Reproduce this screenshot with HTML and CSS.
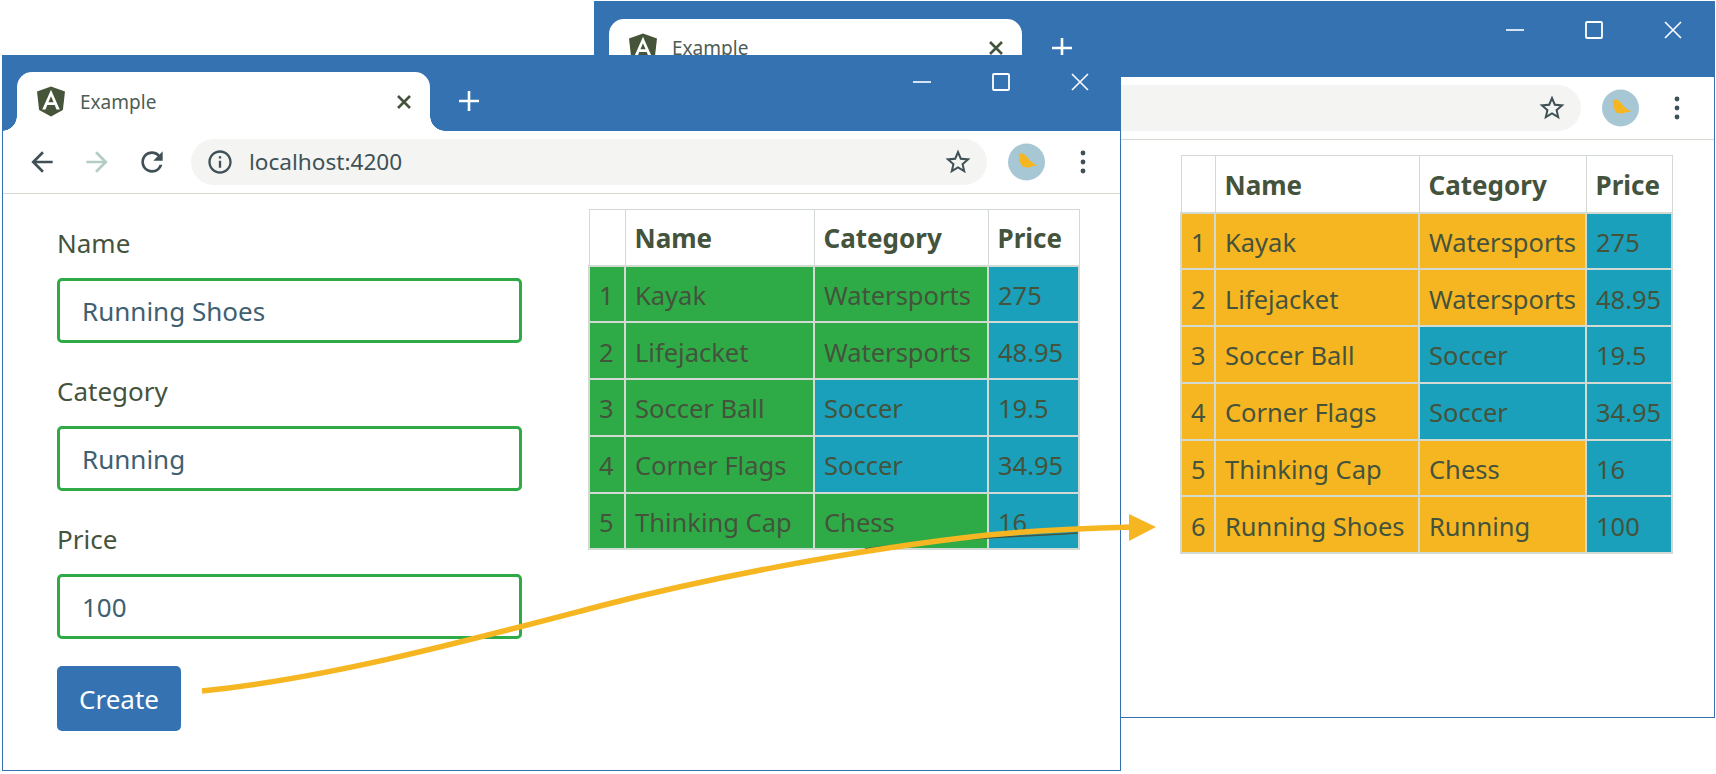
FILE: index.html
```html
<!DOCTYPE html>
<html lang="en">
<head>
  <meta charset="UTF-8">
  <title>Example</title>
  <link rel="stylesheet" href="styles.css">
</head>
<body>

  <svg class="defs" width="0" height="0">
    <symbol id="i-angular" viewBox="32 30 186 200"><path fill="#46553a" d="M125 30L31.9 63.2l14.2 123.1L125 230l78.9-43.7 14.2-123.1z"/><path fill="#fff" d="M125 52.1L66.8 182.6h21.7l11.7-29.2h49.4l11.7 29.2h21.7zM142 135.4h-34l17-40.9z"/></symbol>
    <symbol id="i-back" viewBox="0 0 24 24"><path d="M20 11H7.83l5.59-5.59L12 4l-8 8 8 8 1.41-1.41L7.83 13H20v-2z"/></symbol>
    <symbol id="i-reload" viewBox="0 0 24 24"><path d="M17.65 6.35A7.958 7.958 0 0 0 12 4c-4.42 0-7.99 3.58-7.99 8s3.57 8 7.99 8c3.73 0 6.84-2.55 7.73-6h-2.08A5.99 5.99 0 0 1 12 18c-3.31 0-6-2.69-6-6s2.69-6 6-6c1.66 0 3.14.69 4.22 1.78L13 11h7V4l-2.35 2.35z"/></symbol>
    <symbol id="i-info" viewBox="0 0 24 24"><path d="M11 7h2v2h-2zm0 4h2v6h-2zm1-9C6.48 2 2 6.48 2 12s4.48 10 10 10 10-4.48 10-10S17.52 2 12 2zm0 18c-4.41 0-8-3.59-8-8s3.59-8 8-8 8 3.59 8 8-3.59 8-8 8z"/></symbol>
    <symbol id="i-star" viewBox="0 0 24 24"><path d="M22 9.24l-7.19-.62L12 2 9.19 8.63 2 9.24l5.46 4.73L5.82 21 12 17.27 18.18 21l-1.63-7.03L22 9.24zM12 15.4l-3.76 2.27 1-4.28-3.32-2.88 4.38-.38L12 6.1l1.71 4.04 4.38.38-3.32 2.88 1 4.28L12 15.4z"/></symbol>
    <symbol id="i-dots" viewBox="0 0 8 26"><circle cx="4" cy="4" r="2.4"/><circle cx="4" cy="13" r="2.4"/><circle cx="4" cy="22" r="2.4"/></symbol>
    <symbol id="i-bird" viewBox="0 0 38 38"><circle cx="19" cy="19" r="19" fill="#a6c7d3"/><path fill="#f6b622" d="M11 11l4-1 3 2 5 6 7 5-5 0-3 2-7-1-3-5z"/></symbol>
    <symbol id="i-tabx" viewBox="0 0 16 16"><path d="M2 2l12 12M14 2L2 14" stroke="currentColor" stroke-width="2.6" fill="none"/></symbol>
    <symbol id="i-plus" viewBox="0 0 20 20"><path d="M10 0v20M0 10h20" stroke="currentColor" stroke-width="2.6" fill="none"/></symbol>
    <symbol id="i-min" viewBox="0 0 18 18"><path d="M0 9h18" stroke="currentColor" stroke-width="1.6" fill="none"/></symbol>
    <symbol id="i-max" viewBox="0 0 18 18"><rect x="1" y="1" width="16" height="16" rx="1" stroke="currentColor" stroke-width="1.8" fill="none"/></symbol>
    <symbol id="i-close" viewBox="0 0 18 18"><path d="M1 1l16 16M17 1L1 17" stroke="currentColor" stroke-width="1.6" fill="none"/></symbol>
  </svg>

  <!-- Window behind -->
  <div class="window window-back">
    <div class="titlebar">
      <div class="tab">
        <svg class="tab-logo"><use href="#i-angular"/></svg>
        <span class="tab-title">Example</span>
        <svg class="tab-close"><use href="#i-tabx"/></svg>
      </div>
      <svg class="new-tab"><use href="#i-plus"/></svg>
      <div class="controls">
        <svg><use href="#i-min"/></svg>
        <svg><use href="#i-max"/></svg>
        <svg><use href="#i-close"/></svg>
      </div>
    </div>
    <div class="toolbar">
      <div class="nav">
        <svg class="nav-icon"><use href="#i-back"/></svg>
        <svg class="nav-icon forward"><use href="#i-back"/></svg>
        <svg class="nav-icon"><use href="#i-reload"/></svg>
      </div>
      <div class="omnibox">
        <svg class="info-icon"><use href="#i-info"/></svg>
        <span class="url">localhost:4200</span>
        <svg class="star-icon"><use href="#i-star"/></svg>
      </div>
      <svg class="avatar"><use href="#i-bird"/></svg>
      <svg class="dots"><use href="#i-dots"/></svg>
    </div>
    <div class="content content-back">
      <table class="products products-back">
        <thead>
          <tr><th class="col-id"></th><th class="col-name">Name</th><th class="col-cat">Category</th><th class="col-price">Price</th></tr>
        </thead>
        <tbody>
          <tr><td class="yellow">1</td><td class="yellow">Kayak</td><td class="yellow">Watersports</td><td class="teal">275</td></tr>
          <tr><td class="yellow">2</td><td class="yellow">Lifejacket</td><td class="yellow">Watersports</td><td class="teal">48.95</td></tr>
          <tr><td class="yellow">3</td><td class="yellow">Soccer Ball</td><td class="teal">Soccer</td><td class="teal">19.5</td></tr>
          <tr><td class="yellow">4</td><td class="yellow">Corner Flags</td><td class="teal">Soccer</td><td class="teal">34.95</td></tr>
          <tr><td class="yellow">5</td><td class="yellow">Thinking Cap</td><td class="yellow">Chess</td><td class="teal">16</td></tr>
          <tr><td class="yellow">6</td><td class="yellow">Running Shoes</td><td class="yellow">Running</td><td class="teal">100</td></tr>
        </tbody>
      </table>
    </div>
  </div>

  <!-- Window in front -->
  <div class="window window-front">
    <div class="titlebar">
      <div class="tab">
        <svg class="tab-logo"><use href="#i-angular"/></svg>
        <span class="tab-title">Example</span>
        <svg class="tab-close"><use href="#i-tabx"/></svg>
      </div>
      <svg class="new-tab"><use href="#i-plus"/></svg>
      <div class="controls">
        <svg><use href="#i-min"/></svg>
        <svg><use href="#i-max"/></svg>
        <svg><use href="#i-close"/></svg>
      </div>
    </div>
    <div class="toolbar">
      <div class="nav">
        <svg class="nav-icon"><use href="#i-back"/></svg>
        <svg class="nav-icon forward"><use href="#i-back"/></svg>
        <svg class="nav-icon"><use href="#i-reload"/></svg>
      </div>
      <div class="omnibox">
        <svg class="info-icon"><use href="#i-info"/></svg>
        <span class="url">localhost:4200</span>
        <svg class="star-icon"><use href="#i-star"/></svg>
      </div>
      <svg class="avatar"><use href="#i-bird"/></svg>
      <svg class="dots"><use href="#i-dots"/></svg>
    </div>
    <div class="content">
      <form class="product-form">
        <label class="field-label">Name</label>
        <input class="field-input" value="Running Shoes">
        <label class="field-label">Category</label>
        <input class="field-input" value="Running">
        <label class="field-label">Price</label>
        <input class="field-input" value="100">
        <button class="create-btn" type="button">Create</button>
      </form>
      <table class="products">
        <thead>
          <tr><th class="col-id"></th><th class="col-name">Name</th><th class="col-cat">Category</th><th class="col-price">Price</th></tr>
        </thead>
        <tbody>
          <tr><td class="green">1</td><td class="green">Kayak</td><td class="green">Watersports</td><td class="teal">275</td></tr>
          <tr><td class="green">2</td><td class="green">Lifejacket</td><td class="green">Watersports</td><td class="teal">48.95</td></tr>
          <tr><td class="green">3</td><td class="green">Soccer Ball</td><td class="teal">Soccer</td><td class="teal">19.5</td></tr>
          <tr><td class="green">4</td><td class="green">Corner Flags</td><td class="teal">Soccer</td><td class="teal">34.95</td></tr>
          <tr><td class="green">5</td><td class="green">Thinking Cap</td><td class="green">Chess</td><td class="teal">16</td></tr>
        </tbody>
      </table>
    </div>
  </div>

  <!-- Arrow between the windows -->
  <svg class="arrow" viewBox="0 0 1716 774">
    <path d="M865 549C900 544 950 540 988 538C1020 536 1050 535 1078 533" fill="none" stroke="#45553f" stroke-width="1.5"/>
    <path d="M202 691C330 678 470 640 600 606C700 580 850 550 988 535C1040 530 1090 528 1132 527" fill="none" stroke="#f6b622" stroke-width="5.5"/>
    <path d="M1129 514L1156 527L1129 541Z" fill="#f6b622"/>
  </svg>

</body>
</html>
```

FILE: styles.css
```css
body {
  margin: 0;
  height: 774px;
  position: relative;
  overflow: hidden;
  background: #fff;
  font-family: "Noto Sans", sans-serif;
  color: #44533c;
}
.defs {
  position: absolute;
}

/* windows */
.window {
  position: absolute;
  box-sizing: border-box;
  background: #fff;
  border: 1px solid #3472b2;
  border-top: none;
}
.window-back {
  left: 594px;
  top: 1px;
  width: 1121px;
  height: 717px;
}
.window-front {
  left: 2px;
  top: 55px;
  width: 1119px;
  height: 716px;
}

/* title bar */
.titlebar {
  display: flex;
  align-items: flex-end;
  height: 76px;
  background: #3472b2;
  color: #fff;
}
.tab {
  position: relative;
  display: flex;
  align-items: center;
  box-sizing: border-box;
  width: 413px;
  height: 59px;
  margin-left: 14px;
  padding: 0 18px 0 20px;
  background: #fff;
  border-radius: 15px 15px 0 0;
}
.tab::before,
.tab::after {
  content: "";
  position: absolute;
  bottom: 0;
  width: 15px;
  height: 15px;
}
.tab::before {
  left: -15px;
  background: radial-gradient(circle at 0 0, #3472b2 14.5px, #fff 15px);
}
.tab::after {
  right: -15px;
  background: radial-gradient(circle at 100% 0, #3472b2 14.5px, #fff 15px);
}
.tab-logo {
  width: 28px;
  height: 31px;
}
.tab-title {
  flex: 1;
  margin-left: 15px;
  font-size: 19px;
  color: #4d5d55;
}
.tab-close {
  width: 16px;
  height: 16px;
  color: #44533c;
}
.new-tab {
  width: 20px;
  height: 20px;
  margin: 0 0 20px 29px;
}
.controls {
  display: flex;
  gap: 61px;
  margin: 0 31px 40px auto;
}
.controls svg {
  width: 18px;
  height: 18px;
}
.window-back .tab {
  height: 58px;
}
.window-back .new-tab {
  margin: 0 0 19px 30px;
}
.window-back .controls {
  margin: 0 32px 38px auto;
}

/* toolbar */
.toolbar {
  display: flex;
  align-items: center;
  box-sizing: border-box;
  height: 63px;
  padding: 0 33px 1px 23px;
  border-bottom: 1px solid #d6d9cf;
}
.nav {
  display: flex;
  gap: 23px;
  margin-right: 23px;
}
.nav-icon {
  width: 32px;
  height: 32px;
  fill: #3f5157;
}
.nav-icon.forward {
  fill: #b4cdc4;
  transform: scaleX(-1);
}
.omnibox {
  flex: 1;
  display: flex;
  align-items: center;
  height: 46px;
  padding: 0 14px 0 15px;
  background: #f4f5f2;
  border-radius: 23px;
}
.info-icon {
  width: 28px;
  height: 28px;
  fill: #3f5157;
}
.url {
  flex: 1;
  margin-left: 15px;
  font-size: 22.6px;
  color: #3f5157;
}
.star-icon {
  width: 30px;
  height: 30px;
  fill: #3f5157;
}
.avatar {
  width: 37px;
  height: 38px;
  margin-left: 21px;
}
.dots {
  width: 8px;
  height: 26px;
  margin-left: 34px;
  fill: #3f5157;
}

/* page content */
.content {
  display: flex;
  align-items: flex-start;
  padding: 15px 0 0 54px;
}
.content-back {
  padding-left: 585px;
}
.product-form {
  display: flex;
  flex-direction: column;
  width: 465px;
  margin: 16px 66px 0 0;
}
.field-label {
  height: 36px;
  margin-bottom: 17px;
  font-size: 26px;
  line-height: 36px;
}
.field-input {
  box-sizing: border-box;
  height: 65px;
  margin-bottom: 30px;
  padding: 0 22px;
  font: 26px "Noto Sans", sans-serif;
  color: #3f6070;
  background: #fff;
  border: 3px solid #2eab47;
  border-radius: 5px;
}
.field-input:last-of-type {
  margin-bottom: 27px;
}
.create-btn {
  width: 124px;
  height: 65px;
  padding: 0;
  font: 26px "Noto Sans", sans-serif;
  color: #fff;
  background: #3472b2;
  border: none;
  border-radius: 5px;
}

/* tables */
.products {
  border-collapse: collapse;
  table-layout: fixed;
  width: 490px;
  font-size: 25.5px;
}
.products th,
.products td {
  box-sizing: border-box;
  height: 56.8px;
  padding: 2px 9px 0;
  text-align: left;
  white-space: nowrap;
  border: 1px solid #d3dad3;
}
.products td {
  border-width: 2px;
}
.products th {
  height: 56px;
  font-size: 26px;
  font-weight: 700;
}
.col-id { width: 36px; }
.col-name { width: 189px; }
.col-cat { width: 174px; }
.col-price { width: 91px; }
.products-back {
  width: 491px;
}
.products-back th {
  height: 57px;
}
.products-back .col-id { width: 34px; }
.products-back .col-name { width: 204px; }
.products-back .col-cat { width: 167px; }
.products-back .col-price { width: 86px; }
.green { background: #2eab47; }
.teal { background: #1aa0ba; }
.yellow { background: #f6b622; }

.arrow {
  position: absolute;
  left: 0;
  top: 0;
  width: 1716px;
  height: 774px;
  pointer-events: none;
}
```
